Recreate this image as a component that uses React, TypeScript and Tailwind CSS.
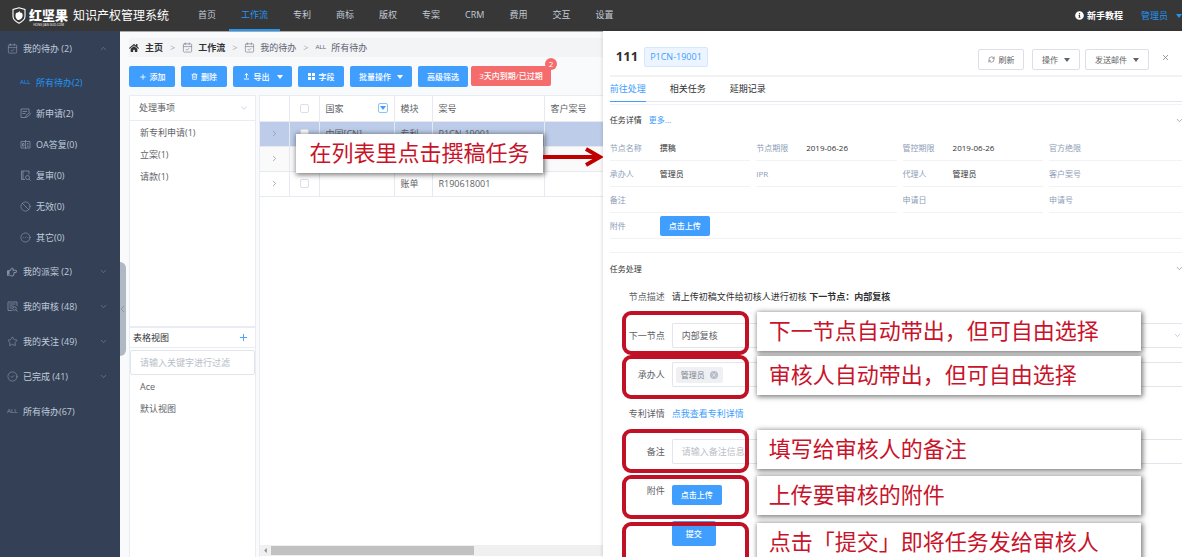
import type { ReactNode } from "react";
import {
  Ban,
  CalendarCheck,
  ChevronDown,
  ChevronRight,
  ChevronUp,
  CircleCheck,
  CircleEllipsis,
  Plus,
  RefreshCw,
  Star,
  Trash2,
  X,
} from "lucide-react";
import { FaHome, FaInfoCircle, FaRegHandPointRight } from "react-icons/fa";

const thin = { size: 11, strokeWidth: 1.5 };

function AllMark() {
  return <span className="font-['Liberation_Sans_Narrow','Liberation_Sans',sans-serif] text-[6px]">ALL</span>;
}

function Caret({ className = "" }: { className?: string }) {
  return (
    <svg viewBox="0 0 6 4" className={`h-1 w-1.5 fill-current ${className}`}>
      <path d="M0 0h6L3 4z" />
    </svg>
  );
}

function Line({ children, className = "size-[11px]" }: { children: ReactNode; className?: string }) {
  return (
    <svg viewBox="0 0 22 22" fill="none" stroke="currentColor" strokeWidth="1.6" className={className}>
      {children}
    </svg>
  );
}

const NoteIcon = () => (
  <Line>
    <path d="M18 8V2H2v17h9M5 7h9M5 11h6M12 15l7-6 2 3-7 6-3 1z" />
  </Line>
);
const ReplyIcon = () => (
  <Line>
    <path d="M2 5h18v13H2zM11 2v18M5 9v5h3V9zM14 9h3M14 12h3M14 15h3" />
  </Line>
);
const ReviewIcon = () => (
  <Line>
    <path d="M18 9V2H3v17h7M6 2v17M18 18l3 3" />
    <circle cx="15" cy="15" r="4" />
  </Line>
);
const AuditIcon = () => (
  <Line>
    <path d="M20 10V2H2v17h9M5 6h12M5 10h8M5 14h5M18 18l3 3" />
    <circle cx="15" cy="15" r="3.5" />
  </Line>
);

const navItems = ["首页", "工作流", "专利", "商标", "版权", "专案", "CRM", "费用", "交互", "设置"];

function TopBar() {
  return (
    <header className="flex h-[31px] shrink-0 items-center bg-[#373737] text-[9px]">
      <div className="flex w-[186px] shrink-0 items-center pl-3 text-white">
        <svg viewBox="0 0 28 34" className="h-[17px] w-[14px]">
          <path d="M14 1.5 26 5v14c0 7-6 10.500-12 13.500C8 29.500 2 26 2 19V5z" fill="none" stroke="white" strokeWidth="2.200" />
          <path d="M8 12c3-1 5-1 7-4l1 3c5 0 6 4 5 8s-5 7-8 7-6-4-6-8c0-2 0-4 1-6z" fill="white" />
        </svg>
        <div className="ml-[3px] flex flex-col items-center pt-[2px]">
          <span className="text-[13px] leading-[16px] font-black">红坚果</span>
          <span className="text-[3px] leading-[4px]">HONG JIAN GUO.COM</span>
        </div>
        <span className="ml-[5px] text-[12px] whitespace-nowrap">知识产权管理系统</span>
      </div>
      <nav className="flex h-full gap-px">
        {navItems.map((item) => (
          <a
            key={item}
            href="#"
            className={
              item === "工作流"
                ? "flex items-center border-b-2 border-[#2196f3] px-3 text-[#2196f3]"
                : "flex items-center border-b-2 border-transparent px-3 text-[#c3ccd8]"
            }
          >
            {item}
          </a>
        ))}
      </nav>
      <div className="ml-auto flex items-center">
        <a href="#" className="flex items-center gap-[3px] font-bold text-white">
          <FaInfoCircle size={9} />
          新手教程
        </a>
        <button className="ml-[18px] flex items-center gap-2 text-[#2196f3]">
          管理员
          <Caret />
        </button>
      </div>
    </header>
  );
}

const subItems = [
  { icon: <AllMark />, label: "所有待办(2)", active: true },
  { icon: <NoteIcon />, label: "新申请(2)" },
  { icon: <ReplyIcon />, label: "OA答复(0)" },
  { icon: <ReviewIcon />, label: "复审(0)" },
  { icon: <Ban {...thin} />, label: "无效(0)" },
  { icon: <CircleEllipsis {...thin} />, label: "其它(0)" },
];

const groups = [
  { icon: <FaRegHandPointRight size={10} />, label: "我的派案 (2)", open: true },
  { icon: <AuditIcon />, label: "我的审核 (48)", open: true },
  { icon: <Star {...thin} />, label: "我的关注 (49)", open: true },
  { icon: <CircleCheck {...thin} />, label: "已完成 (41)", open: true },
  { icon: <AllMark />, label: "所有待办(67)", open: false },
];

function Sidebar() {
  return (
    <aside className="w-[120px] shrink-0 bg-[#334056] text-[9px] text-[#c0ccda]">
      <a href="#" className="flex h-[35px] items-center px-[7px]">
        <span className="flex w-4 text-[#8691a3]">
          <CalendarCheck {...thin} />
        </span>
        我的待办 (2)
        <ChevronUp size={9} strokeWidth={1.5} className="mr-[5px] ml-auto text-[#8691a3]" />
      </a>
      <div className="py-px">
        {subItems.map((s) => (
          <a
            key={s.label}
            href="#"
            className={s.active ? "flex h-[31px] items-center pl-5 text-[#2196f3]" : "flex h-[31px] items-center pl-5"}
          >
            <span className={s.active ? "flex w-4" : "flex w-4 text-[#8691a3]"}>{s.icon}</span>
            {s.label}
          </a>
        ))}
      </div>
      {groups.map((g) => (
        <a key={g.label} href="#" className="flex h-[35px] items-center px-[7px]">
          <span className="flex w-4 text-[#8691a3]">{g.icon}</span>
          {g.label}
          {g.open && <ChevronDown size={9} strokeWidth={1.5} className="mr-[5px] ml-auto text-[#8691a3]" />}
        </a>
      ))}
    </aside>
  );
}

function Breadcrumb() {
  return (
    <nav className="flex h-[19px] items-center bg-[#f3f4f6] text-[9px] text-[#5d6370]">
      <a href="#" className="flex items-center gap-[6px] font-bold text-[#303133]">
        <FaHome size={10} />
        主页
      </a>
      <span className="px-[7px] text-[#a8adb8]">&gt;</span>
      <a href="#" className="flex items-center gap-[5px] font-bold text-[#303133]">
        <CalendarCheck {...thin} className="text-[#7d8592]" />
        工作流
      </a>
      <span className="px-[7px] text-[#a8adb8]">&gt;</span>
      <a href="#" className="flex items-center gap-[5px]">
        <CalendarCheck {...thin} className="text-[#7d8592]" />
        我的待办
      </a>
      <span className="px-[7px] text-[#a8adb8]">&gt;</span>
      <a href="#" className="flex items-center gap-[5px]">
        <AllMark />
        所有待办
      </a>
    </nav>
  );
}

function BlueButton({ children, className }: { children: ReactNode; className: string }) {
  return (
    <button
      className={`flex shrink-0 items-center justify-center rounded-xs bg-[#409eff] text-[8px] font-medium whitespace-nowrap text-white ${className}`}
    >
      {children}
    </button>
  );
}

function Toolbar() {
  return (
    <div className="mt-[9px] flex h-[21px] gap-[6px]">
      <BlueButton className="w-[46px] gap-[3px]">
        <Plus size={8} strokeWidth={2.5} />
        添加
      </BlueButton>
      <BlueButton className="w-[46px] gap-[3px]">
        <Trash2 size={7} strokeWidth={2.5} />
        删除
      </BlueButton>
      <BlueButton className="w-[59px] gap-1">
        <Line className="size-[7px]">
          <path d="M11 15V2M6 7l5-5 5 5M3 19h16" strokeWidth="3" />
        </Line>
        导出
        <Caret className="ml-[3px]" />
      </BlueButton>
      <BlueButton className="w-[46px] gap-1">
        <svg viewBox="0 0 7 7" className="size-[7px] fill-current">
          <path d="M0 0h3v3H0zM4 0h3v3H4zM0 4h3v3H0zM4 4h3v3H4z" />
        </svg>
        字段
      </BlueButton>
      <BlueButton className="w-[62px] gap-[6px]">
        批量操作
        <Caret />
      </BlueButton>
      <div className="flex gap-[3px]">
        <BlueButton className="w-[50px]">高级筛选</BlueButton>
        <button className="relative h-5 w-20 rounded-xs bg-[#f56c6c] text-[8px] font-medium whitespace-nowrap text-white">
          3天内到期/已过期
          <span className="absolute -top-2 -right-[6px] flex size-3 items-center justify-center rounded-full bg-[#f56c6c]">
            2
          </span>
        </button>
      </div>
    </div>
  );
}

function FilterPanel() {
  return (
    <div className="flex w-[127px] shrink-0 flex-col border-x border-t border-[#e9ecf3] bg-white text-[9px] text-[#606266]">
      <div className="flex h-[25px] shrink-0 items-center justify-between border-b border-[#e9ecf3] pr-[6px] pl-[9px]">
        处理事项
        <ChevronDown size={10} strokeWidth={1.5} className="text-[#b4bccc]" />
      </div>
      <ul className="h-[205px] shrink-0 pt-px pl-[10px]">
        {["新专利申请(1)", "立案(1)", "请款(1)"].map((t) => (
          <li key={t} className="flex h-[22px] items-center">
            {t}
          </li>
        ))}
      </ul>
      <div className="flex h-[22px] shrink-0 items-center justify-between border-t-2 border-b border-[#e9ecf3] pr-[6px] pl-[3px] text-[#303133]">
        表格视图
        <button aria-label="新建视图" className="text-[#409eff]">
          <Plus size={11} strokeWidth={2} color="#409eff" />
        </button>
      </div>
      <input
        aria-label="过滤视图"
        placeholder="请输入关键字进行过滤"
        className="mt-[2px] h-[25px] w-full shrink-0 rounded-xs border border-[#e2e5ec] px-[9px] placeholder:text-[#b8bec9]"
      />
      <ul className="pt-px pl-[10px]">
        {["Ace", "默认视图"].map((t) => (
          <li key={t} className="flex h-[22px] items-center">
            {t}
          </li>
        ))}
      </ul>
    </div>
  );
}

const rows = [
  { country: "中国[CN]", module: "专利", no: "P1CN-19001", tone: "bg-[#bccce9]" },
  { country: "", module: "", no: "", tone: "bg-[#fafafa]" },
  { country: "", module: "账单", no: "R190618001", tone: "bg-white" },
];

function Tick() {
  return (
    <input
      type="checkbox"
      aria-label="选择"
      className="block size-[9px] appearance-none rounded-xs border border-[#dcdfe6] bg-white"
    />
  );
}

function TaskTable() {
  return (
    <div className="flex min-w-0 flex-1 flex-col overflow-hidden border-t border-l border-[#e9ecf3] bg-white">
      <table className="w-[420px] table-fixed border-collapse text-left text-[9px] text-[#606266] [&_td]:border-r [&_td]:border-b [&_td]:border-[#e6e9f0] [&_td]:px-[6px] [&_th]:border-r [&_th]:border-b [&_th]:border-[#e6e9f0] [&_th]:px-[6px] [&_th]:font-normal">
        <colgroup>
          <col className="w-[29px]" />
          <col className="w-[30px]" />
          <col className="w-[75px]" />
          <col className="w-[38px]" />
          <col className="w-[112px]" />
          <col />
        </colgroup>
        <thead>
          <tr className="h-[25px]">
            <th />
            <th>
              <div className="flex justify-center">
                <Tick />
              </div>
            </th>
            <th>
              <div className="flex items-center justify-between">
                国家
                <button aria-label="筛选国家" className="flex size-[10px] items-center justify-center rounded-xs border border-[#8fc2fb] text-[#409eff]">
                  <Caret />
                </button>
              </div>
            </th>
            <th>模块</th>
            <th>案号</th>
            <th>客户案号</th>
          </tr>
        </thead>
        <tbody>
          {rows.map((r, i) => (
            <tr key={i} className={`h-[25px] ${r.tone}`}>
              <td>
                <ChevronRight size={9} strokeWidth={2} className="ml-1 text-[#8d929b]" />
              </td>
              <td>
                <div className="flex justify-center">
                  <Tick />
                </div>
              </td>
              <td>{r.country}</td>
              <td>{r.module}</td>
              <td>{r.no}</td>
              <td />
            </tr>
          ))}
        </tbody>
      </table>
      <div className="mt-auto mb-px flex h-[11px] items-center gap-1 bg-[#f0f0f0] pl-1">
        <svg viewBox="0 0 3 6" className="h-[5px] w-[3px] fill-[#8a8a8a]">
          <path d="M3 0v6L0 3z" />
        </svg>
        <div className="h-[9px] w-3/5 bg-[#c1c1c1]" />
      </div>
    </div>
  );
}

function GhostButton({ children, className }: { children: ReactNode; className: string }) {
  return (
    <button
      className={`flex h-[21px] items-center justify-center rounded-xs border border-[#dcdfe6] bg-white text-[8px] whitespace-nowrap text-[#606266] ${className}`}
    >
      {children}
    </button>
  );
}

function Field({ label, children }: { label: string; children?: ReactNode }) {
  return (
    <div className="flex items-center border-b border-[#f1f2f4] text-[#303133]">
      <dt className="w-[50px] shrink-0 text-[#8d9db5]">{label}</dt>
      <dd className="whitespace-nowrap">{children}</dd>
    </div>
  );
}

function FormRow({
  label,
  id,
  className,
  children,
}: {
  label: string;
  id?: string;
  className: string;
  children: ReactNode;
}) {
  return (
    <div className={`flex items-center ${className}`}>
      <label htmlFor={id} className="w-[55px] shrink-0 text-right">
        {label}
      </label>
      <div className="ml-[7px] flex min-w-0 flex-1">{children}</div>
    </div>
  );
}

const notes = [
  { text: "下一节点自动带出，但可自由选择", pos: "top-[58px]" },
  { text: "审核人自动带出，但可自由选择", pos: "top-[102px]" },
  { text: "填写给审核人的备注", pos: "top-[176px]" },
  { text: "上传要审核的附件", pos: "top-[222px]" },
  { text: "点击「提交」即将任务发给审核人", pos: "top-[269px]" },
];

const noteBox =
  "flex h-[39px] items-center bg-white pb-[2px] text-[22px] whitespace-nowrap text-[#c8142b] shadow-[1px_1px_5px_1px_rgba(0,0,0,0.5)]";

function Drawer() {
  return (
    <section className="z-10 flex w-[49%] shrink-0 flex-col overflow-hidden bg-white pt-px pl-[7px] text-[8px] text-[#303133] shadow-[-1px_0_3px_rgba(0,0,0,0.12)]">
      <div className="flex h-[45px] shrink-0 items-center border-b-2 border-[#f2f3f5] pt-[7px] pl-[6px]">
        <h2 className="text-[13px] font-bold">111</h2>
        <span className="ml-[6px] flex h-5 items-center rounded-xs border border-[#d3e8ff] bg-[#ecf5ff] px-[5px] text-[9px] text-[#409eff]">
          P1CN-19001
        </span>
        <div className="ml-auto flex items-center pt-[5px]">
          <GhostButton className="w-[46px] gap-1">
            <RefreshCw size={7} />
            刷新
          </GhostButton>
          <GhostButton className="ml-2 w-12 gap-[6px]">
            操作
            <Caret />
          </GhostButton>
          <GhostButton className="ml-[5px] w-16 gap-[6px]">
            发送邮件
            <Caret />
          </GhostButton>
          <button aria-label="关闭" className="mr-3 mb-[5px] ml-3 text-[#7b7f87]">
            <X size={9} strokeWidth={2} />
          </button>
        </div>
      </div>
      <div className="flex h-[25px] shrink-0 gap-6 border-b border-[#dfe4ed] text-[9px]">
        <button className="-mb-px border-b border-[#409eff] text-[#409eff]">前往处理</button>
        <button>相关任务</button>
        <button>延期记录</button>
      </div>
      <div className="mt-[2px] flex h-[31px] shrink-0 items-center border-t border-[#f1f2f4]">
        任务详情
        <a href="#" className="ml-[7px] text-[#409eff]">
          更多...
        </a>
        <ChevronDown size={9} className="-mr-[2px] ml-auto text-[#8d929b]" />
      </div>
      <dl className="grid shrink-0 auto-rows-[26px] grid-cols-[1fr_1fr_1fr_133px] gap-x-[6px]">
        <Field label="节点名称">撰稿</Field>
        <Field label="节点期限">2019-06-26</Field>
        <Field label="管控期限">2019-06-26</Field>
        <Field label="官方绝限" />
        <Field label="承办人">管理员</Field>
        <Field label="IPR" />
        <Field label="代理人">管理员</Field>
        <Field label="客户案号" />
        <div className="col-span-2 grid">
          <Field label="备注" />
        </div>
        <Field label="申请日" />
        <Field label="申请号" />
        <div className="col-span-4 grid">
          <Field label="附件">
            <BlueButton className="h-5 w-[50px]">点击上传</BlueButton>
          </Field>
        </div>
      </dl>
      <div className="relative mt-[13px] flex shrink-0 flex-col border-t border-[#f1f2f4]">
        <div className="flex h-[31px] items-center">
          任务处理
          <ChevronDown size={9} className="-mr-[2px] ml-auto text-[#8d929b]" />
        </div>
        <form className="text-[9px] text-[#606266]" onSubmit={(e) => e.preventDefault()}>
          <FormRow label="节点描述" className="h-[25px]">
            <p className="text-[#303133]">
              请上传初稿文件给初核人进行初核 <b>下一节点：内部复核</b>
            </p>
          </FormRow>
          <FormRow label="下一节点" id="next" className="mt-[14px] h-[25px]">
            <div className="relative flex flex-1">
              <select id="next" className="h-[25px] flex-1 appearance-none rounded-l-xs border border-r-0 border-[#e2e5ec] px-[9px]">
                <option>内部复核</option>
              </select>
              <ChevronDown size={9} className="pointer-events-none absolute top-2 right-0 text-[#b4bccc]" />
            </div>
          </FormRow>
          <FormRow label="承办人" className="mt-[14px] h-[25px]">
            <div className="flex h-[25px] flex-1 items-center rounded-l-xs border border-r-0 border-[#e2e5ec] pl-[3px]">
              <span className="flex h-4 items-center gap-[5px] rounded-xs bg-[#eef0f4] px-[5px] text-[8px] text-[#80848c]">
                管理员
                <button aria-label="移除管理员" className="flex size-2 items-center justify-center rounded-full bg-[#b8bec9] text-white">
                  <X size={6} />
                </button>
              </span>
            </div>
          </FormRow>
          <FormRow label="专利详情" className="mt-[14px] h-[25px]">
            <a href="#" className="text-[#409eff]">
              点我查看专利详情
            </a>
          </FormRow>
          <FormRow label="备注" id="remark" className="mt-[13px] h-[25px]">
            <input
              id="remark"
              placeholder="请输入备注信息"
              className="h-[25px] min-w-0 flex-1 rounded-l-xs border border-r-0 border-[#e2e5ec] px-[9px] placeholder:text-[#b8bec9]"
            />
          </FormRow>
          <FormRow label="附件" className="mt-[14px] h-[25px]">
            <BlueButton className="mt-[8px] h-5 w-[50px]">点击上传</BlueButton>
          </FormRow>
          <FormRow label="" className="mt-[18px] h-[25px]">
            <BlueButton className="h-[25px] w-11">提交</BlueButton>
          </FormRow>
        </form>
        {notes.map((n) => (
          <div key={n.text} className={`pointer-events-none absolute right-[41px] left-3 flex gap-2 ${n.pos}`}>
            <div className="h-11 w-[127px] rounded-[9px] border-4 border-[#c01127]" />
            <p className={`mt-px flex-1 pl-3 ${noteBox}`}>{n.text}</p>
          </div>
        ))}
      </div>
    </section>
  );
}

export default function App() {
  return (
    <div className="flex h-screen flex-col overflow-hidden bg-[#f9fafc] font-['Open_Sans','Noto_Sans_CJK_SC',sans-serif] leading-normal">
      <TopBar />
      <div className="relative flex min-h-0 flex-1">
        <Sidebar />
        <main className="relative flex min-w-0 flex-1 flex-col border-t border-[#a9a9a9] pt-[6px] pl-[9px]">
          <button
            aria-label="收起侧栏"
            className="absolute top-[230px] left-0 flex h-[94px] w-[6px] items-center rounded-r-md bg-[#b0b8c5] text-[#8d97a6]"
          >
            <svg viewBox="0 0 4 8" className="h-2 w-1" fill="none" stroke="currentColor">
              <path d="M4 1 1 4l3 3" />
            </svg>
          </button>
          <Breadcrumb />
          <Toolbar />
          <div className="mt-2 flex min-h-0 flex-1 gap-[3px]">
            <FilterPanel />
            <TaskTable />
          </div>
        </main>
        <Drawer />
        <div className="pointer-events-none absolute top-[103px] left-[296px] z-20 flex items-center">
          <p className={`w-[247px] justify-center ${noteBox}`}>在列表里点击撰稿任务</p>
          <svg viewBox="0 0 60 20" className="mt-[6px] h-5 w-[60px]" fill="none" stroke="#c00000" strokeWidth="4">
            <path d="M0 10h56M43 2l14 8-14 8" />
          </svg>
        </div>
      </div>
    </div>
  );
}
